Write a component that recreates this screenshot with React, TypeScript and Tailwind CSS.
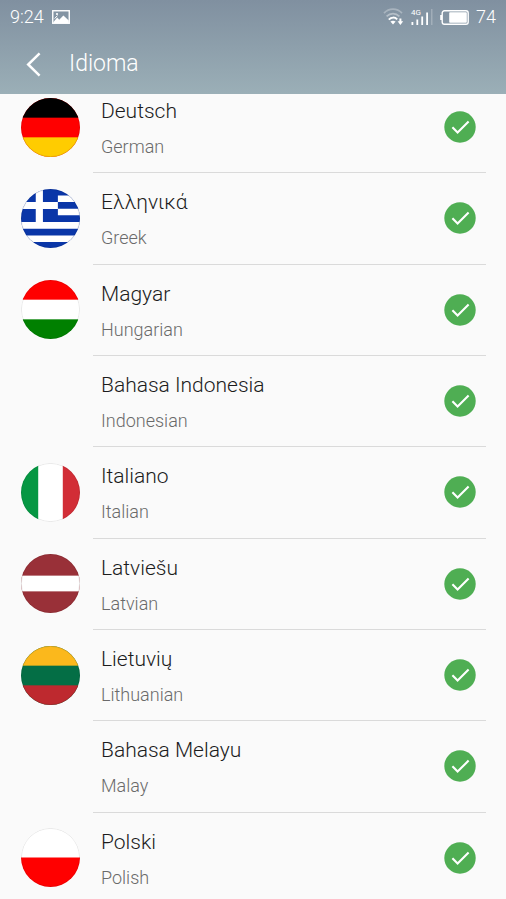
import type { ReactNode } from "react";

interface ILanguage {
  code: string;
  name: string;
  english: string;
  flag?: ReactNode;
}

// Flags are drawn on a 60x60 canvas and clipped by a rounded wrapper
const horizontal = (top: string, middle: string, bottom: string) => (
  <>
    <rect width="60" height="60" fill={middle} />
    <rect width="60" height="20" fill={top} />
    <rect y="40" width="60" height="20" fill={bottom} />
  </>
);

const languages: ILanguage[] = [
  { code: "de", name: "Deutsch", english: "German", flag: horizontal("#000000", "#ff0000", "#ffcc00") },
  {
    code: "el",
    name: "Ελληνικά",
    english: "Greek",
    flag: (
      <>
        <rect width="60" height="60" fill="#0a36a8" />
        <path
          d="M0 13.3h37.5v7H0zM15 0h7.3v33.5H15zM37.5 6.6H60v6.7H37.5zM37.5 20.2H60v6.6H37.5zM0 33.5h60v6.8H0zM0 47.2h60v6.6H0z"
          fill="#fff"
        />
      </>
    ),
  },
  { code: "hu", name: "Magyar", english: "Hungarian", flag: horizontal("#ff0000", "#ffffff", "#008000") },
  { code: "id", name: "Bahasa Indonesia", english: "Indonesian" },
  {
    code: "it",
    name: "Italiano",
    english: "Italian",
    flag: (
      <>
        <rect width="60" height="60" fill="#fff" />
        <rect width="17.5" height="60" fill="#069743" />
        <rect x="42.5" width="17.5" height="60" fill="#d22d36" />
      </>
    ),
  },
  {
    code: "lv",
    name: "Latviešu",
    english: "Latvian",
    flag: (
      <>
        <rect width="60" height="60" fill="#993038" />
        <rect y="22" width="60" height="16" fill="#fff" />
      </>
    ),
  },
  { code: "lt", name: "Lietuvių", english: "Lithuanian", flag: horizontal("#fbb81c", "#046e45", "#be292f") },
  { code: "ms", name: "Bahasa Melayu", english: "Malay" },
  {
    code: "pl",
    name: "Polski",
    english: "Polish",
    flag: (
      <>
        <rect width="60" height="60" fill="#fff" />
        <rect y="30" width="60" height="30" fill="#ff0000" />
      </>
    ),
  },
];

function PictureIcon() {
  return (
    <svg width="18" height="14" viewBox="0 0 18 14" fill="none">
      <rect x="0.75" y="0.75" width="16.5" height="12.5" stroke="#fff" strokeWidth="1.4" />
      <path d="M1.5 13V12L5.2 7.6 7.2 9.8 11.4 5.6 16.8 10.6V13Z" fill="#fff" />
      <path d="M2.6 8.6L5.4 5.6" stroke="#fff" strokeWidth="1" />
      <circle cx="5" cy="4" r="1.1" fill="#fff" />
    </svg>
  );
}

function WifiIcon() {
  return (
    <svg width="21" height="18" viewBox="0 0 21 18" fill="none" strokeWidth="1.7">
      <path d="M1 5.2C6 -0.2 14 -0.2 19 5.2" stroke="#fff" strokeOpacity="0.3" />
      <path d="M3.6 8.4C7.4 4.6 12.6 4.6 16.4 8.4" stroke="#fff" strokeOpacity="0.4" />
      <path d="M5.8 11.6C8.4 9 11.8 9 14.2 11.4" stroke="#fff" strokeWidth="2" />
      <path d="M7.4 13.6Q10 12 12.6 13.6L10 16.6Z" fill="#fff" />
      <path d="M17.4 10.5V14" stroke="#fff" strokeWidth="2" />
      <path d="M14.6 13.2H20.2L17.4 17Z" fill="#fff" />
    </svg>
  );
}

function SignalIcon() {
  return (
    <span className="flex flex-col">
      <span className="h-[6px] text-[8px] leading-[6px] font-normal">4G</span>
      <svg width="22" height="13" viewBox="0 0 22 13" fill="#fff" className="-mt-1 overflow-visible">
        <path d="M0.5 10h1.8v3H0.5zM5.4 7.5h1.8V13H5.4zM10.3 4.5h1.8V13h-1.8zM15.2 0.5H17V13h-1.8z" />
        <path d="M20.2 -3h1.2v16h-1.2z" fillOpacity="0.3" />
      </svg>
    </span>
  );
}

function BatteryIcon() {
  return (
    <svg width="29" height="15" viewBox="0 0 29 15" fill="none">
      <rect x="2.2" y="0.8" width="26" height="13.4" rx="2.2" stroke="#fff" strokeWidth="1.4" />
      <path d="M0.2 5h1.8v5H0.2z" fill="#fff" />
      <rect x="9.2" y="2.2" width="17.6" height="10.6" rx="0.8" fill="#fff" />
    </svg>
  );
}

function CheckBadge() {
  return (
    <svg width="32" height="32" viewBox="0 0 32 32" fill="none" className="shrink-0">
      <circle cx="16" cy="16" r="15.7" fill="#4fae53" />
      <path d="M8.4 16.2L13.6 21.6L24.6 10.6" stroke="#fff" strokeWidth="2.1" />
    </svg>
  );
}

function Flag({ children }: { children?: ReactNode }) {
  return (
    <span className="w-[59px] h-[59px] mb-px shrink-0">
      {children && (
        <svg viewBox="0 0 60 60" className="w-full h-full rounded-full">
          {children}
          <circle cx="30" cy="30" r="29.6" fill="none" stroke="#000" strokeOpacity="0.12" strokeWidth="0.8" />
        </svg>
      )}
    </span>
  );
}

function LanguageRow({ language }: { language: ILanguage }) {
  return (
    <li className="flex">
      <button type="button" className="flex flex-1 items-center pl-[21px] pr-5 gap-[13px] text-left">
        <Flag>{language.flag}</Flag>
        <span className="flex flex-1 self-stretch items-center justify-between pl-2 pr-[10px] border-b border-[#dadada]">
          <span className="flex flex-col pt-1">
            <span className="text-[21px] leading-9 font-light text-[#1c1c1c]">{language.name}</span>
            <span className="text-lg leading-9 font-light text-[#6a6a6a]">{language.english}</span>
          </span>
          <CheckBadge />
        </span>
      </button>
    </li>
  );
}

export default function App() {
  return (
    <div className="flex flex-col h-screen overflow-hidden bg-[#fafafa] font-[Roboto,sans-serif]">
      <header className="relative z-10 shrink-0 text-white bg-linear-to-b from-[#8090a0] to-[#9bafb7]">
        <div className="flex h-[34px] items-center justify-between px-[10px] text-lg font-light">
          <div className="flex items-center gap-2">
            <span>9:24</span>
            <PictureIcon />
          </div>
          <div className="flex items-center gap-[7px]">
            <WifiIcon />
            <SignalIcon />
            <BatteryIcon />
            <span>74</span>
          </div>
        </div>
        <div className="flex h-[60px] items-center pl-5">
          <button type="button" aria-label="Back" className="flex w-[49px] h-12 items-center pl-[6px]">
            <svg width="15" height="25" viewBox="0 0 15 25" fill="none">
              <path d="M13.6 1.4L2.2 12.5L13.6 23.6" stroke="#fff" strokeWidth="2.5" />
            </svg>
          </button>
          <h1 className="text-[23px] font-light">Idioma</h1>
        </div>
      </header>
      <main className="flex-1 min-h-0 overflow-y-auto [scrollbar-width:none]">
        <ul className="grid auto-rows-fr min-h-[822px] -mt-3">
          {languages.map((language) => (
            <LanguageRow key={language.code} language={language} />
          ))}
        </ul>
      </main>
    </div>
  );
}
